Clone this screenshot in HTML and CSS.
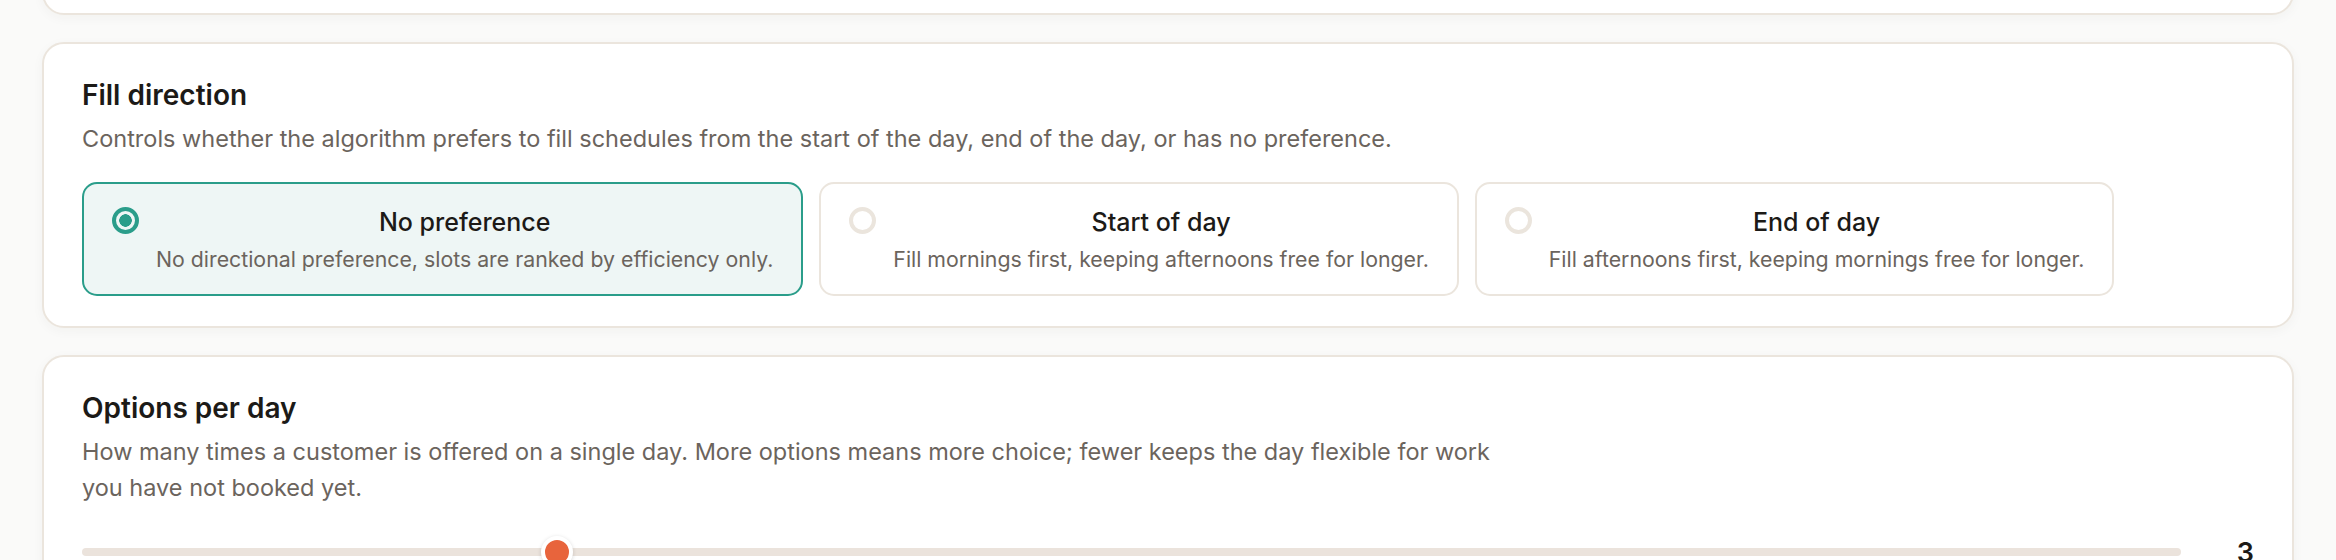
FILE: index.html
```html
<!DOCTYPE html>
<html lang="en">
<head>
<meta charset="UTF-8">
<meta name="viewport" content="width=device-width, initial-scale=1.0">
<title>Scheduling settings</title>
<link rel="stylesheet" href="styles.css">
</head>
<body>

<div class="settings">

  <div class="card card-cut"></div>

  <div class="card">
    <h2>Fill direction</h2>
    <p class="hint">Controls whether the algorithm prefers to fill schedules from the start of the day, end of the day, or has no preference.</p>

    <div class="choices">
      <label class="choice selected">
        <input type="radio" name="fill" value="none" checked>
        <span class="dot"></span>
        <span class="choice-text">
          <span class="choice-title">No preference</span>
          <span class="choice-desc">No directional preference, slots are ranked by efficiency only.</span>
        </span>
      </label>
      <label class="choice">
        <input type="radio" name="fill" value="start">
        <span class="dot"></span>
        <span class="choice-text">
          <span class="choice-title">Start of day</span>
          <span class="choice-desc">Fill mornings first, keeping afternoons free for longer.</span>
        </span>
      </label>
      <label class="choice">
        <input type="radio" name="fill" value="end">
        <span class="dot"></span>
        <span class="choice-text">
          <span class="choice-title">End of day</span>
          <span class="choice-desc">Fill afternoons first, keeping mornings free for longer.</span>
        </span>
      </label>
    </div>
  </div>

  <div class="card">
    <h2>Options per day</h2>
    <p class="hint narrow">How many times a customer is offered on a single day. More options means more choice; fewer keeps the day flexible for work you have not booked yet.</p>

    <div class="slider-row">
      <input type="range" class="slider" min="1" max="10" value="3">
      <span class="slider-value">3</span>
    </div>
  </div>

</div>

</body>
</html>
```

FILE: styles.css
```css
body {
  margin: 0;
  background: #fafaf9;
  font-family: Inter, "Noto Sans", sans-serif;
  color: #1c1a17;
}

.settings {
  display: flex;
  flex-direction: column;
  gap: 27px;
  padding: 0 42px;
}

.card {
  background: #fff;
  border: 2px solid #ebe5dd;
  border-radius: 22px;
  padding: 33px 38px 30px;
  box-shadow: 0 3px 12px rgba(60, 40, 20, 0.04);
}

/* the card above, scrolled mostly out of view */
.card-cut {
  padding: 0;
  height: 88px;
  margin-top: -77px;
}

h2 {
  margin: 0;
  font-size: 28px;
  line-height: 36px;
  font-weight: 600;
  color: #1c1a17;
}

.hint {
  margin: 8px 0 0;
  font-size: 23.5px;
  line-height: 36px;
  color: #6b645d;
}

.hint.narrow {
  max-width: 1425px;
}

.choices {
  display: flex;
  gap: 16px;
  margin-top: 25px;
}

.choice {
  display: flex;
  align-items: flex-start;
  gap: 17px;
  padding: 20px 28px;
  border: 2px solid #ebe5dd;
  border-radius: 15px;
  background: #fff;
  cursor: pointer;
}

.choice.selected {
  border-color: #2a9d8a;
  background: #eef6f5;
}

.choice input {
  display: none;
}

.dot {
  width: 27px;
  height: 27px;
  margin-top: 3px;
  box-sizing: border-box;
  border: 4px solid #ebe5dd;
  border-radius: 50%;
  flex-shrink: 0;
}

.choice.selected .dot {
  border-color: #2a9d8a;
  background: radial-gradient(circle, #2a9d8a 0 6px, transparent 6.5px);
}

.choice-text {
  display: flex;
  flex-direction: column;
  align-items: center;
  gap: 4px;
}

.choice-title {
  font-size: 25px;
  line-height: 36px;
  font-weight: 500;
  color: #1c1a17;
}

.choice-desc {
  font-size: 21.3px;
  line-height: 30px;
  color: #6b645d;
}

.slider-row {
  display: flex;
  align-items: center;
  gap: 41px;
  margin-top: 24px;
  height: 44px;
}

.slider {
  flex: 1;
  margin: 0;
  height: 8px;
  -webkit-appearance: none;
  appearance: none;
  background: #ebe3dc;
  border-radius: 4px;
}

.slider::-webkit-slider-thumb {
  -webkit-appearance: none;
  width: 32px;
  height: 32px;
  border-radius: 50%;
  background: #e8643c;
  border: 4px solid #fff;
  box-shadow: 0 1px 4px rgba(0, 0, 0, 0.15);
}

.slider-value {
  width: 32px;
  text-align: right;
  font-size: 27px;
  font-weight: 600;
}
```
